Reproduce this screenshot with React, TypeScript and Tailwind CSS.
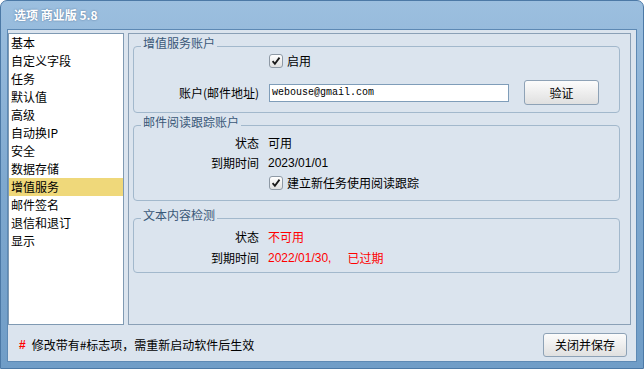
import React from "react";

const items = [
  "基本",
  "自定义字段",
  "任务",
  "默认值",
  "高级",
  "自动换IP",
  "安全",
  "数据存储",
  "增值服务",
  "邮件签名",
  "退信和退订",
  "显示",
];

const CJK = "font-['Noto_Sans_CJK_SC',sans-serif]";

function Check() {
  return (
    <span className="w-[14px] h-[14px] rounded-[3px] border border-[#8e99a5] bg-gradient-to-b from-white to-[#e0e0e0] flex items-center justify-center shrink-0">
      <svg width="10" height="10" viewBox="0 0 10 10">
        <path d="M1.6 5.2 L3.9 7.9 L8.5 1.6" fill="none" stroke="#1a1a1a" strokeWidth="1.8" />
      </svg>
    </span>
  );
}

function Group({ title, className, children }: { title: string; className?: string; children: React.ReactNode }) {
  return (
    <div className={`relative border border-[#a2b8cc] rounded-[4px] ${className ?? ""}`}>
      <span className="absolute left-[7px] top-[-11px] px-[2px] bg-[#dbe4ee] text-[#3a5878] leading-[14px] text-[12px]">
        {title}
      </span>
      {children}
    </div>
  );
}

function Row({ label, children, className }: { label: string; children: React.ReactNode; className?: string }) {
  return (
    <div className={`flex items-center h-[20px] ${className ?? ""}`}>
      <div className="w-[125px] text-right shrink-0">{label}</div>
      <div className="ml-[9px] flex items-center">{children}</div>
    </div>
  );
}

export default function App() {
  return (
    <div
      className={`w-[644px] h-[369px] flex flex-col bg-gradient-to-b from-[#9cbfdf] via-[#7ea8cf] to-[#709dc7] border border-[#4c79a6] rounded-t-[7px] px-[6px] pb-[6px] text-[12px] text-black ${CJK}`}
    >
      <div className="h-[28px] flex items-center pl-[7px] text-white font-bold text-[12px] [text-shadow:0_0_2px_rgba(40,70,110,0.6)]">
        选项 商业版 5.8
      </div>
      <div className="flex-1 flex flex-col bg-[#dbe4ee] border border-[#5d89b4]">
        <div className="flex h-[292px] mt-[3px] pr-[5px] gap-[4px]">
          <div className="w-[116px] bg-white border border-[#7f9ab3] pt-0">
            {items.map((it) => (
              <div
                key={it}
                className={`h-[18px] leading-[18px] pl-[2px] ${it === "增值服务" ? "bg-[#efd87a]" : ""}`}
              >
                {it}
              </div>
            ))}
          </div>
          <div className="flex-1 border border-[#8aa0b6] pl-[4px] pr-[10px] pt-[12px]">
            <Group title="增值服务账户" className="pt-[4px] pb-[7px]">
              <Row label="">
                <span className="ml-[1px] flex items-center gap-[4px]">
                  <Check />
                  <span>启用</span>
                </span>
              </Row>
              <div className="flex items-center h-[25px] mt-[9px]">
                <div className="w-[125px] text-right shrink-0">账户(邮件地址)</div>
                <div className="ml-[10px] w-[240px] h-[18px] bg-white border border-[#7f9db9] flex items-center pl-[2px] font-['Liberation_Mono',monospace] text-[10px]">
                  webouse@gmail.com
                </div>
                <button className="ml-[15px] w-[75px] h-[25px] rounded-[3px] border border-[#8ea2b6] bg-gradient-to-b from-[#fcfcfc] to-[#e0e0e0] text-[12px]">
                  验证
                </button>
              </div>
            </Group>
            <Group title="邮件阅读跟踪账户" className="mt-[12px] pt-[7px] pb-[7px]">
              <Row label="状态">可用</Row>
              <Row label="到期时间">
                <span className="font-['Liberation_Sans',sans-serif]">2023/01/01</span>
              </Row>
              <Row label="">
                <span className="ml-[1px] flex items-center gap-[4px]">
                  <Check />
                  <span>建立新任务使用阅读跟踪</span>
                </span>
              </Row>
            </Group>
            <Group title="文本内容检测" className="mt-[17px] pt-[8px] pb-[4px]">
              <Row label="状态">
                <span className="text-[#ff0000]">不可用</span>
              </Row>
              <Row label="到期时间" className="mt-[1px]">
                <span className="text-[#ff0000] font-['Liberation_Sans',sans-serif]">2022/01/30,</span>
                <span className="text-[#ff0000] ml-[16px]">已过期</span>
              </Row>
            </Group>
          </div>
        </div>
        <div className="flex-1 flex items-center justify-between pl-[11px] pr-[9px] pt-[4px]">
          <div className="flex items-center">
            <span className="text-[#ff0000] font-bold font-['Liberation_Sans',sans-serif] text-[12px]">#</span>
            <span className="ml-[6px]">修改带有#标志项，需重新启动软件后生效</span>
          </div>
          <button className="w-[84px] h-[24px] rounded-[3px] border border-[#8ea2b6] bg-gradient-to-b from-[#fcfcfc] to-[#e0e0e0] text-[12px]">
            关闭并保存
          </button>
        </div>
      </div>
    </div>
  );
}
